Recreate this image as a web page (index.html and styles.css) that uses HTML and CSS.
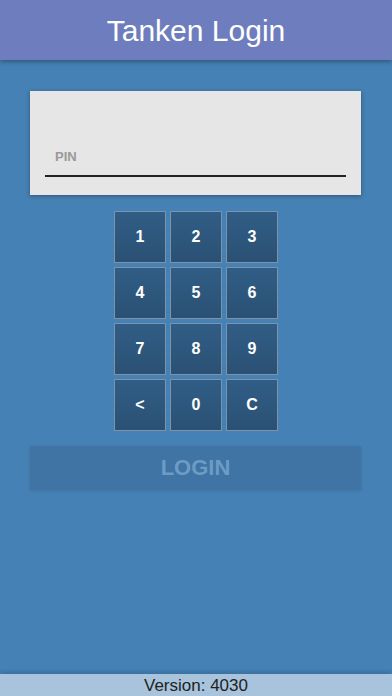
FILE: index.html
```html
<!DOCTYPE html>
<html lang="de">
<head>
  <meta charset="UTF-8" />
  <title>Tanken Login</title>
  <link rel="stylesheet" href="styles.css">
</head>
<body>
  <!-- Kopfzeile -->
  <header class="topbar">
    <h1>Tanken Login</h1>
  </header>

  <div class="content">
    <!-- Eingabefeld PIN -->
    <div class="pin-card">
      <label class="pin-label" for="pin">PIN</label>
      <input type="password" id="pin" class="pin-input" />
    </div>

    <!-- Ziffernblock -->
    <div class="keypad">
      <button class="key">1</button>
      <button class="key">2</button>
      <button class="key">3</button>
      <button class="key">4</button>
      <button class="key">5</button>
      <button class="key">6</button>
      <button class="key">7</button>
      <button class="key">8</button>
      <button class="key">9</button>
      <button class="key">&lt;</button>
      <button class="key">0</button>
      <button class="key">C</button>
    </div>

    <button class="login-btn" disabled>LOGIN</button>
  </div>

  <footer class="version">Version: 4030</footer>
</body>
</html>
```

FILE: styles.css
```css
:root {
  --bg-color: #4581b4;
  --header-color: #6e7dbd;
  --card-color: #e6e6e6;
  --key-top: #305d86;
  --key-bottom: #2b5174;
  --footer-color: #a7c4dc;
  --font-sans: "Liberation Sans", Arial, sans-serif;
}

html, body {
  height: 100%;
  margin: 0;
}
body {
  display: flex;
  flex-direction: column;
  background-color: var(--bg-color);
  font-family: var(--font-sans);
}

/* Kopfzeile */
.topbar {
  height: 60px;
  flex-shrink: 0;
  background-color: var(--header-color);
  display: flex;
  align-items: center;
  justify-content: center;
  box-shadow: 0 2px 4px rgba(0, 0, 0, 0.3);
  position: relative;
  z-index: 1;
}
.topbar h1 {
  margin: 0;
  color: #fff;
  font-size: 30px;
  font-weight: 400;
  padding-top: 1px;
}

.content {
  flex: 1;
  display: flex;
  flex-direction: column;
  align-items: center;
  padding: 31px 31px 0 30px;
}

/* PIN-Karte */
.pin-card {
  align-self: stretch;
  height: 104px;
  box-sizing: border-box;
  background-color: var(--card-color);
  box-shadow: 0 1px 4px rgba(0, 0, 0, 0.35);
  padding: 0 15px;
  display: flex;
  flex-direction: column;
  justify-content: flex-end;
  padding-bottom: 18px;
}
.pin-label {
  font-size: 13px;
  font-weight: 700;
  color: #999;
  padding-left: 10px;
  margin-bottom: 3px;
}
.pin-input {
  border: none;
  border-bottom: 2px solid #222;
  background: transparent;
  outline: none;
  height: 8px;
  padding: 0;
  margin: 0;
}

/* Ziffernblock */
.keypad {
  display: grid;
  grid-template-columns: repeat(3, 52px);
  grid-auto-rows: 52px;
  gap: 4px;
  margin-top: 16px;
  margin-left: 1px;
}
.key {
  box-sizing: border-box;
  border: 1px solid #7d93a8;
  background: linear-gradient(to bottom, var(--key-top), var(--key-bottom));
  color: #fff;
  font-family: var(--font-sans);
  font-size: 16px;
  font-weight: 700;
  padding: 0;
  cursor: pointer;
}

/* Login-Knopf */
.login-btn {
  align-self: stretch;
  height: 44px;
  margin-top: 15px;
  border: none;
  background-color: #3f74a4;
  color: #6c9cc5;
  font-family: var(--font-sans);
  font-size: 22px;
  font-weight: 700;
  padding-bottom: 2px;
  box-shadow: 0 1px 3px rgba(0, 0, 0, 0.1);
}

/* Versionszeile */
.version {
  height: 22px;
  flex-shrink: 0;
  background-color: var(--footer-color);
  color: #222;
  font-size: 17px;
  text-align: center;
  line-height: 24px;
  box-shadow: 0 -2px 4px rgba(0, 0, 0, 0.15);
}
```
